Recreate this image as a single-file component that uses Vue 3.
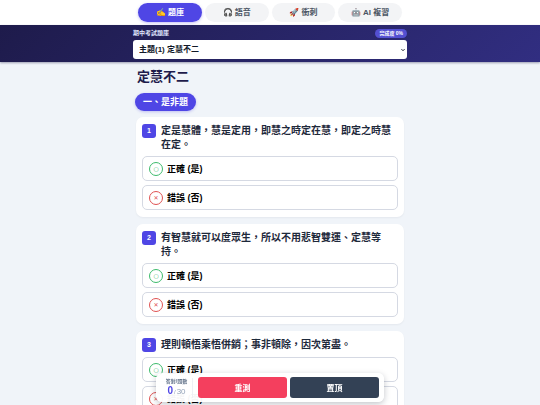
<script setup>
import { ref, computed } from 'vue'

const tabs = ['✍️ 題庫', '🎧 語音', '🚀 衝刺', '🤖 AI 複習']
const activeTab = ref(0)
const topic = ref('主題(1) 定慧不二')
const total = 30

const questions = [
  '定是慧體，慧是定用，即慧之時定在慧，即定之時慧在定。',
  '有智慧就可以度眾生，所以不用悲智雙運、定慧等持。',
  '理則頓悟乘悟併銷；事非頓除，因次第盡。',
]
const options = [
  { kind: 'yes', mark: '○', text: '正確 (是)' },
  { kind: 'no', mark: '✕', text: '錯誤 (否)' },
]

const answers = ref({})
const score = ref(0)
const progress = computed(() => Math.round((Object.keys(answers.value).length / total) * 100))

function reset() {
  answers.value = {}
  score.value = 0
}
function toTop() {
  window.scrollTo({ top: 0, behavior: 'smooth' })
}
</script>

<template>
  <div class="page">
    <nav class="nav">
      <div class="tabs">
        <button
          v-for="(tab, i) in tabs"
          :key="tab"
          type="button"
          class="tab"
          :class="{ active: i === activeTab }"
          @click="activeTab = i"
        >{{ tab }}</button>
      </div>
    </nav>

    <header class="banner">
      <div class="banner-inner">
        <div class="banner-row">
          <label for="topic">期中考試題庫</label>
          <span class="progress">完成度 {{ progress }}%</span>
        </div>
        <div class="picker">
          <select id="topic" v-model="topic">
            <option>主題(1) 定慧不二</option>
          </select>
          <svg class="chevron" viewBox="0 0 4 4" aria-hidden="true">
            <path d="M0.5 1.2 L2 2.7 L3.5 1.2" fill="none" stroke="#111827" stroke-width="1" />
          </svg>
        </div>
      </div>
    </header>

    <main class="content">
      <h1>定慧不二</h1>
      <h2>一、是非題</h2>
      <section v-for="(question, i) in questions" :key="i" class="card">
        <div class="question">
          <span class="number">{{ i + 1 }}</span>
          <p>{{ question }}</p>
        </div>
        <button
          v-for="option in options"
          :key="option.kind"
          type="button"
          class="option"
          @click="answers[i] = option.kind"
        >
          <span class="mark" :class="option.kind">{{ option.mark }}</span>
          <span>{{ option.text }}</span>
        </button>
      </section>
    </main>

    <div class="toolbar">
      <div class="score">
        <span class="score-label">答對/題數</span>
        <span class="score-value"><b>{{ score }}</b><i>/</i>{{ total }}</span>
      </div>
      <button type="button" class="action reset" @click="reset">重測</button>
      <button type="button" class="action top" @click="toTop">置頂</button>
    </div>
  </div>
</template>

<style>
html {
  scrollbar-width: none;
}
body {
  margin: 0;
  background: #f0f4f9;
}
</style>

<style scoped>
.page {
  font-family: "Liberation Sans", "Noto Sans CJK TC", sans-serif;
  font-weight: 700;
  color: #1e293b;
  padding-bottom: 40px;
}
button,
select {
  font: inherit;
  box-sizing: border-box;
  cursor: pointer;
}
.nav {
  background: #fff;
  padding: 3px 12px;
}
.tabs {
  display: grid;
  grid-template-columns: repeat(4, 1fr);
  gap: 3px;
  max-width: 264px;
  margin: 0 auto;
}
.tab {
  height: 19px;
  padding: 0;
  border: 0;
  border-radius: 10px;
  background: #f3f4f6;
  color: #4b5563;
  font-size: 8px;
  line-height: 12px;
}
.tab.active {
  background: #4f46e5;
  color: #fff;
  box-shadow: 0 1px 3px rgba(79, 70, 229, 0.35);
}
.banner {
  background: linear-gradient(135deg, #1e1b4b, #312e81);
  box-shadow: 0 1px 2px rgba(30, 27, 75, 0.4);
  padding: 4px 12px 3px;
}
.banner-inner {
  max-width: 274px;
  margin: 0 auto;
}
.banner-row {
  display: flex;
  align-items: center;
  justify-content: space-between;
  height: 9px;
  margin-bottom: 2px;
}
.banner-row label {
  color: #e0e7ff;
  font-size: 6px;
  line-height: 9px;
}
.progress {
  background: #5450d2;
  color: #fff;
  font-size: 5px;
  line-height: 9px;
  padding: 0 4px;
  border-radius: 5px;
}
.picker {
  position: relative;
}
.picker select {
  appearance: none;
  display: block;
  width: 100%;
  height: 19px;
  padding: 0 12px 0 6px;
  border: 0;
  border-radius: 3px;
  background: #fff;
  color: #111827;
  font-size: 8px;
}
.chevron {
  position: absolute;
  top: 8px;
  right: 2px;
  width: 4px;
  height: 4px;
  pointer-events: none;
}
.content {
  max-width: 270px;
  margin: 0 auto;
  padding: 6px 12px 0;
}
h1 {
  margin: 0 0 7px 2px;
  color: #1e1b4b;
  font-size: 13px;
  line-height: 18px;
}
h2 {
  width: fit-content;
  margin: 0 0 6px;
  padding: 0 8px;
  border-radius: 9px;
  background: #4f46e5;
  color: #fff;
  font-size: 9px;
  line-height: 18px;
  box-shadow: 0 1px 3px rgba(79, 70, 229, 0.3);
}
.card {
  display: grid;
  gap: 4px;
  margin: 0 1px 7px;
  padding: 7px 6px;
  border-radius: 7px;
  background: #fff;
  box-shadow: 0 1px 2px rgba(15, 23, 42, 0.05);
}
.question {
  display: flex;
  gap: 5px;
  min-height: 15px;
}
.question p {
  margin: 0;
  flex: 1;
  font-size: 10px;
  line-height: 14px;
}
.number {
  flex: none;
  width: 14px;
  height: 14px;
  border-radius: 3px;
  background: #4f46e5;
  color: #fff;
  font-size: 7px;
  line-height: 14px;
  text-align: center;
}
.option {
  display: flex;
  align-items: center;
  gap: 4px;
  height: 25px;
  padding: 0 6px;
  border: 1px solid #d5d9e3;
  border-radius: 5px;
  background: #fff;
  color: #000;
  font-size: 9px;
}
.mark {
  display: flex;
  align-items: center;
  justify-content: center;
  box-sizing: border-box;
  width: 14px;
  height: 14px;
  border: 1px solid;
  border-radius: 50%;
  font-family: "DejaVu Sans", sans-serif;
  font-size: 6px;
  line-height: 6px;
}
.mark.yes {
  color: #3dbb6c;
}
.mark.no {
  color: #e05252;
}
.toolbar {
  position: fixed;
  left: 50%;
  bottom: 3px;
  transform: translateX(-50%);
  display: grid;
  grid-template-columns: 34px 1fr 1fr;
  gap: 3px;
  align-items: center;
  box-sizing: border-box;
  width: 228px;
  padding: 4px 5px;
  border-radius: 6px;
  background: rgba(255, 255, 255, 0.96);
  box-shadow: 0 2px 6px rgba(15, 23, 42, 0.25);
}
.score {
  display: flex;
  flex-direction: column;
  align-items: center;
  margin-right: 2px;
  border-right: 1px solid #eef0f4;
}
.score-label {
  color: #64748b;
  font-size: 5px;
  line-height: 7px;
}
.score-value {
  color: #94a3b8;
  font-size: 8px;
  line-height: 12px;
  font-weight: 400;
}
.score-value b {
  color: #4f46e5;
  font-size: 10px;
}
.score-value i {
  margin: 0 1px;
  font-size: 6px;
  font-style: normal;
}
.action {
  height: 21px;
  padding: 0;
  border: 0;
  border-radius: 3px;
  color: #fff;
  font-size: 8px;
}
.reset {
  background: #f43f5e;
}
.top {
  background: #334155;
}
</style>
